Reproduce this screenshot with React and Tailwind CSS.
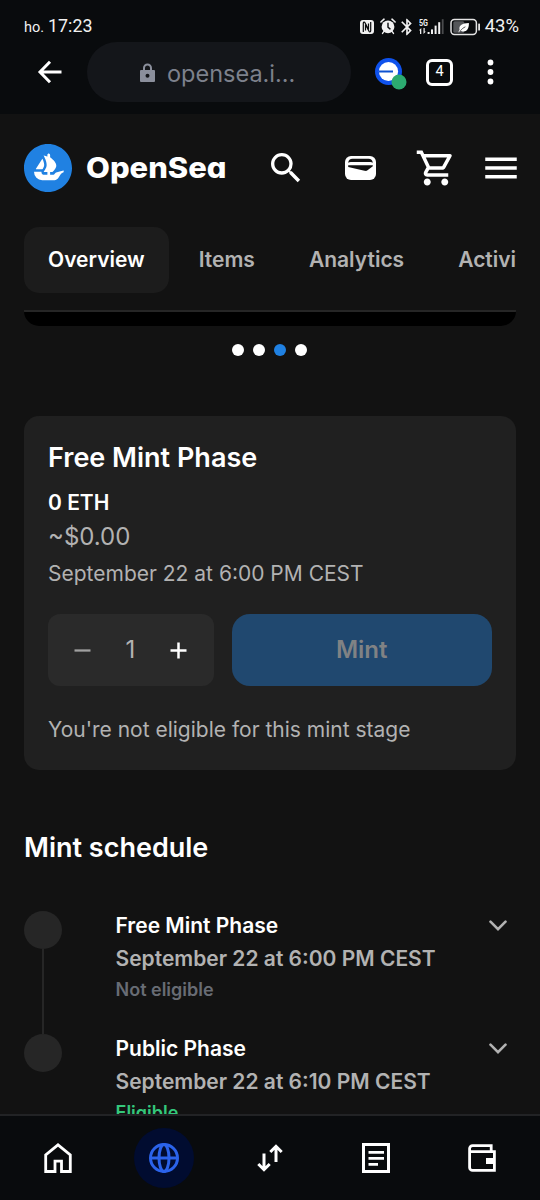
import { MdBluetooth, MdMenu, MdOutlineShoppingCart, MdSearch } from 'react-icons/md'
import { SiOpensea } from 'react-icons/si'

const TABS = ['Overview', 'Items', 'Analytics', 'Activity']

const PHASES = [
  { name: 'Free Mint Phase', date: 'September 22 at 6:00 PM CEST', eligible: false },
  { name: 'Public Phase', date: 'September 22 at 6:10 PM CEST', eligible: true },
]

function NfcIcon() {
  return (
    <svg width="16" height="16" viewBox="0 0 16 16">
      <rect x="1" y="1" width="14" height="14" rx="3" fill="#f1f1f1" />
      <path d="M4.300 13V4.200c0-1.200 1.200-1.300 1.700-.4l3.500 6.700V4.600" fill="none" stroke="#090b0d" strokeWidth="1.200" />
      <path d="M11.700 3v8.800c0 1.200-1.200 1.300-1.700.4L6.500 5.500v5.900" fill="none" stroke="#090b0d" strokeWidth="1.200" />
    </svg>
  )
}

function AlarmIcon() {
  return (
    <svg width="16" height="17" viewBox="0 0 16 17" fill="none" stroke="#f1f1f1" strokeLinecap="round">
      <circle cx="8" cy="8.800" r="6.400" fill="#f1f1f1" stroke="none" />
      <path d="M.9 4 4 1.200M15.100 4 12 1.200" strokeWidth="1.600" />
      <path d="m3.800 13.600-1.300 1.800M12.200 13.600l1.300 1.800" strokeWidth="1.400" />
      <path d="M8 5.200v4l2 1.700" stroke="#090b0d" strokeWidth="1.400" />
    </svg>
  )
}

function SignalIcon() {
  return (
    <svg width="26" height="18" viewBox="0 0 26 18" fill="#f1f1f1">
      <text x="0" y="7.500" fontSize="9.200" fontWeight="700" fontFamily="Roboto, sans-serif" textLength="9" lengthAdjust="spacingAndGlyphs">
        5G
      </text>
      <path d="M0 12.200 2.300 10v6H1v-3.600zM6.800 13.400 4.500 16v-6h1.200v3.400z" />
      <rect x="8.600" y="14" width="2" height="2" />
      <rect x="12" y="11.400" width="2" height="4.600" />
      <rect x="15.600" y="7.600" width="2" height="8.400" />
      <rect x="19.200" y="4.200" width="2" height="11.800" />
      <rect x="22.800" y="1.200" width="1.800" height="14.800" fill="#4a4b4d" />
    </svg>
  )
}

function BatteryIcon() {
  return (
    <svg width="31" height="18" viewBox="0 0 31 18">
      <rect x="3.300" y="3.300" width="11" height="11.400" rx="1.500" fill="#55575a" />
      <rect x="1" y="1.600" width="25.400" height="14.800" rx="3.400" fill="none" stroke="#e4e4e4" strokeWidth="1.500" />
      <rect x="28.200" y="5.400" width="1.800" height="7.200" rx=".6" fill="#e4e4e4" />
      <path
        d="M8.400 14.200c.2-1 .6-1.800 1.200-2.500-1-3.700 1.900-6.500 9.300-6.700.2 6-2.400 9.300-7.100 8.300-.9-.2-1.400-.5-1.700-.7-.5.400-.7 1-.9 1.600z"
        fill="#fff"
      />
      <path d="M10.600 12.600c1.200-1.700 2.700-2.800 4.800-3.800" fill="none" stroke="#2a2b2d" strokeWidth=".8" />
    </svg>
  )
}

function StatusBar() {
  return (
    <div className="flex h-[42px] items-center justify-between pt-[11px] pr-[21px] pl-6 font-['Roboto',sans-serif] text-[#f1f1f1]">
      <div className="flex items-baseline gap-1">
        <span className="text-[14.5px] leading-none">ho.</span>
        <span className="text-[17.8px] leading-none">17:23</span>
      </div>
      <div className="flex items-center">
        <NfcIcon />
        <span className="ml-[5px]">
          <AlarmIcon />
        </span>
        <MdBluetooth className="ml-px size-[20px]" />
        <span className="ml-[2px]">
          <SignalIcon />
        </span>
        <span className="ml-[5px]">
          <BatteryIcon />
        </span>
        <span className="ml-[4px] text-[18.5px] leading-none">43%</span>
      </div>
    </div>
  )
}

function BrowserBar() {
  return (
    <div className="flex h-[60px] items-center">
      <svg className="ml-[36px]" width="26" height="24" viewBox="0 0 26 24" fill="none" stroke="#fff" strokeWidth="3">
        <path d="M25.500 12H4M14 1.800 4 12l10 10.200" />
      </svg>
      <div className="ml-[25px] flex h-[60px] w-[264px] items-center rounded-full bg-[#14161a] pl-[53px]">
        <svg width="15" height="19" viewBox="0 0 15 19">
          <path d="M4 8V5a3.500 3.500 0 0 1 7 0v3" fill="none" stroke="#8b8f9c" strokeWidth="2" />
          <rect x="0" y="7" width="15" height="12" rx="1" fill="#8b8f9c" />
          <circle cx="7.500" cy="12.800" r="2" fill="#14161a" />
        </svg>
        <span className="ml-3 pt-[3px] text-[23.5px] leading-none text-[#7d818c]">opensea.i...</span>
      </div>
      <svg className="ml-[23px]" width="34" height="36" viewBox="0 0 34 36">
        <circle cx="14.500" cy="17.500" r="13.500" fill="#0f52ec" />
        <circle cx="14.500" cy="17.500" r="9.600" fill="#fff" />
        <path d="M5 17.500h14" stroke="#0f52d0" strokeWidth="2" />
        <circle cx="25" cy="28" r="7.500" fill="#2cab70" />
      </svg>
      <div className="ml-[18px] flex size-[27px] items-center justify-center rounded-[6px] border-3 border-white pt-px font-['Roboto',sans-serif] text-[14.5px] leading-none text-white">
        4
      </div>
      <svg className="ml-[34px]" width="7" height="26" viewBox="0 0 7 26" fill="#fff">
        <circle cx="3.500" cy="3.500" r="2.900" />
        <circle cx="3.500" cy="13" r="2.900" />
        <circle cx="3.500" cy="22.500" r="2.900" />
      </svg>
    </div>
  )
}

function SiteHeader() {
  return (
    <div className="flex h-[108px] items-center pl-6 text-white">
      <span className="size-12 rounded-full bg-[radial-gradient(#fff_60%,transparent_62%)]">
        <SiOpensea className="size-12 text-[#2081e2]" />
      </span>
      <span className="ml-[14px] w-[140px] origin-left scale-x-[1.085] text-[28.5px] leading-none font-extrabold whitespace-nowrap [font-feature-settings:'cv11']">
        OpenSea
      </span>
      <MdSearch className="ml-[39.5px] size-[40px]" />
      <svg className="ml-[39.5px]" width="31" height="24" viewBox="0 0 31 24">
        <rect x="0" y="0" width="31" height="24" rx="6" fill="#fff" />
        <path d="M3.200 6.700C3.500 4 5 2.800 7.500 2.800h16c2.500 0 4 1.200 4.300 3.900-.8-.5-1.500-.7-2.500-.7H5.700c-1 0-1.700.2-2.500.7z" fill="#121212" />
        <path d="M3.200 9.200h24.600v1l-5.300 4.100c-.8.700-1.700.8-3 .5L3.200 11z" fill="#121212" />
      </svg>
      <MdOutlineShoppingCart className="ml-[39px] size-[42px]" />
      <MdMenu className="ml-[23px] size-[42px]" />
    </div>
  )
}

function Tabs() {
  return (
    <div className="mx-6 flex gap-1.5 overflow-hidden text-[21px] leading-[66px] font-semibold">
      {TABS.map((tab, i) => (
        <div
          key={tab}
          className={i === 0 ? 'rounded-[15px] bg-[#1c1c1c] px-6 text-white' : 'px-6 text-[#b2b2b2]'}
        >
          {tab}
        </div>
      ))}
    </div>
  )
}

function Carousel() {
  return (
    <>
      <div className="mx-6 mt-[17px] h-4 rounded-b-[15px] border-t-2 border-[#262626] bg-black" />
      <div className="mt-[18px] flex justify-center gap-[9px] pr-px">
        {[0, 1, 2, 3].map((i) => (
          <span key={i} className={i === 2 ? 'size-3 rounded-full bg-[#2081e2]' : 'size-3 rounded-full bg-white'} />
        ))}
      </div>
    </>
  )
}

function MintCard() {
  return (
    <div className="mx-6 mt-[60px] h-[354px] rounded-[15px] bg-[#202020] px-6 pt-6 text-[21px] text-[#b2b2b2]">
      <h2 className="text-[27px] leading-9 font-semibold text-white">Free Mint Phase</h2>
      <div className="mt-[12px] leading-[30px] font-semibold text-white">0 ETH</div>
      <div className="mt-px text-[24px] leading-9">~$0.00</div>
      <div className="mt-1 leading-[30px]">September 22 at 6:00 PM CEST</div>
      <div className="mt-[25px] flex gap-[18px]">
        <div className="flex h-[72px] w-[165.5px] items-center rounded-[12px] bg-[#2a2a2a] pl-[26px] text-[24px]">
          <svg width="17" height="17" viewBox="0 0 17 17" stroke="#a0a0a0" strokeWidth="2.300">
            <path d="M.5 8.500h16" />
          </svg>
          <span className="w-[79px] text-center">1</span>
          <svg width="17" height="17" viewBox="0 0 17 17" stroke="#fff" strokeWidth="2.500">
            <path d="M.5 8.500h16M8.500.5v16" />
          </svg>
        </div>
        <button className="h-[72px] flex-1 rounded-[18px] bg-[#20486f] text-[24px] font-semibold text-[#808284]">
          Mint
        </button>
      </div>
      <div className="mt-[29px] leading-[30px]">You're not eligible for this mint stage</div>
    </div>
  )
}

function Phase({ phase, last }) {
  return (
    <div className="flex h-[123px]">
      <div className="flex w-[37.5px] shrink-0 flex-col items-center">
        <span className="size-[37.5px] shrink-0 rounded-full bg-[#262626]" />
        {!last && <span className="w-[1.5px] flex-1 bg-[#262626]" />}
      </div>
      <div className="ml-[54px] flex-1 font-semibold">
        <div className="text-[21px] leading-[30px] text-white">{phase.name}</div>
        <div className="mt-[3px] text-[21px] leading-[30px] text-[#b2b2b2]">{phase.date}</div>
        <div
          className={
            phase.eligible
              ? 'mt-[2px] text-[18px] leading-[27px] text-[#34c77b]'
              : 'mt-[2px] text-[18px] leading-[27px] text-[#686c74]'
          }
        >
          {phase.eligible ? 'Eligible' : 'Not eligible'}
        </div>
      </div>
      <svg className="mt-[9px] mr-[9px]" width="18" height="12" viewBox="0 0 18 12" fill="none" stroke="#b2b2b2" strokeWidth="2.600" strokeLinecap="round">
        <path d="m1.500 1.700 7.500 7.500 7.500-7.500" />
      </svg>
    </div>
  )
}

function BottomNav() {
  return (
    <nav className="flex h-[86px] shrink-0 border-t-2 border-[#222325] bg-[#090b0d] px-[5px] text-white">
      <div className="flex flex-1 items-center justify-center">
        <svg width="28" height="30" viewBox="0 0 28 30" fill="none" stroke="currentColor" strokeWidth="2.800">
          <path d="M1.700 28.500V11.800L14 1.900l12.300 9.900v16.700h-8.800V18.200h-6.500v10.300z" />
        </svg>
      </div>
      <div className="flex flex-1 items-center justify-center">
        <div className="flex size-[60px] items-center justify-center rounded-full bg-[#010c30]">
          <svg width="30" height="30" viewBox="0 0 30 30" fill="none" stroke="#2b63ea" strokeWidth="3">
            <circle cx="15" cy="15" r="13.500" />
            <ellipse cx="15" cy="15" rx="5" ry="13.500" />
            <path d="M1.500 15h27" />
          </svg>
        </div>
      </div>
      <div className="flex flex-1 items-center justify-center">
        <svg width="28" height="30" viewBox="0 0 28 30" fill="none" stroke="currentColor" strokeWidth="3">
          <path d="M8 10.500v16M2.300 21 8 26.700l5.700-5.700" />
          <path d="M20 19V3.300M14.300 9 20 3.300 25.700 9" />
        </svg>
      </div>
      <div className="flex flex-1 items-center justify-center">
        <svg width="28" height="30" viewBox="0 0 28 30" fill="none" stroke="currentColor" strokeWidth="3">
          <rect x="1.500" y="1.500" width="25" height="27" />
          <path d="M6.500 9.300h15.500M6.500 15.300h15.500M6.500 21.300h9.500" strokeWidth="2.700" />
        </svg>
      </div>
      <div className="flex flex-1 items-center justify-center">
        <svg width="28" height="28" viewBox="0 0 28 28" fill="none" stroke="currentColor" strokeWidth="2.800">
          <path d="M23.200 7V1.600H4.600a3 3 0 0 0-3 3v18.800a3 3 0 0 0 3 3h21.800V7.600H2" />
          <rect x="18" y="14" width="8" height="6" fill="currentColor" stroke="none" />
        </svg>
      </div>
    </nav>
  )
}

export default function App() {
  return (
    <div className="flex h-[1200px] w-[540px] flex-col overflow-hidden bg-[#121212] font-['Inter',sans-serif]">
      <header className="h-[114px] shrink-0 bg-[#090b0d]">
        <StatusBar />
        <BrowserBar />
      </header>
      <main className="min-h-0 flex-1 overflow-hidden">
        <SiteHeader />
        <div className="mt-[5px]">
          <Tabs />
        </div>
        <Carousel />
        <MintCard />
        <h2 className="mx-6 mt-[60px] text-[27px] leading-9 font-semibold text-white">Mint schedule</h2>
        <div className="mx-6 mt-[45px]">
          {PHASES.map((phase, i) => (
            <Phase key={phase.name} phase={phase} last={i === PHASES.length - 1} />
          ))}
        </div>
      </main>
      <BottomNav />
    </div>
  )
}
